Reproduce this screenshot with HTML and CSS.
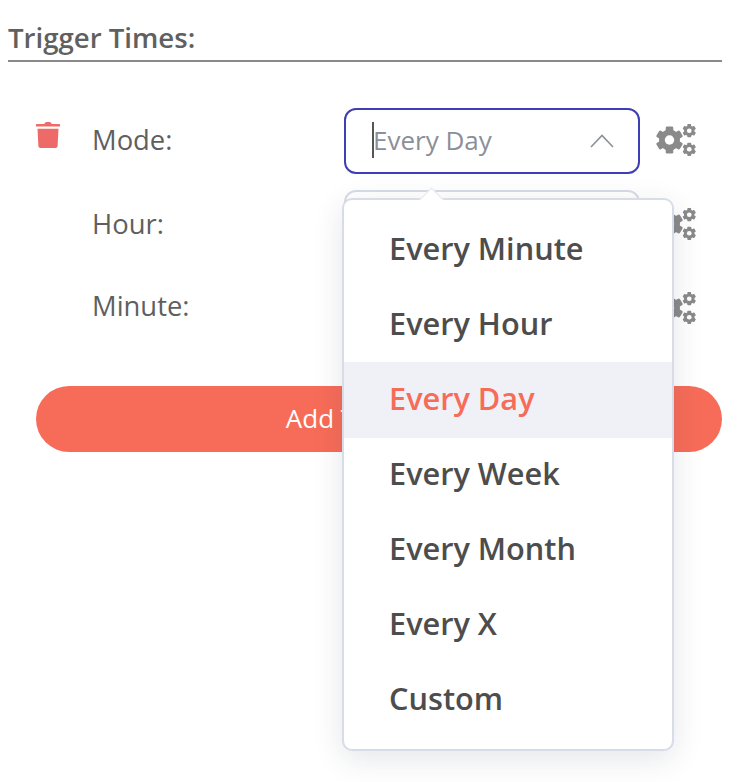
FILE: index.html
```html
<!DOCTYPE html>
<html lang="en">
<head>
    <meta charset="UTF-8">
    <meta name="viewport" content="width=device-width, initial-scale=1.0">
    <title>Trigger Times</title>
    <link rel="stylesheet" href="styles.css">
</head>
<body>

    <svg class="icon-defs" width="0" height="0" aria-hidden="true">
        <symbol id="gear" viewBox="-10 -10 20 20">
            <rect x="-2.8" y="-10" width="5.6" height="20" rx="1"></rect>
            <rect x="-2.8" y="-10" width="5.6" height="20" rx="1" transform="rotate(60)"></rect>
            <rect x="-2.8" y="-10" width="5.6" height="20" rx="1" transform="rotate(120)"></rect>
            <circle r="7.8"></circle>
            <circle r="3.500" fill="#fff"></circle>
        </symbol>
        <symbol id="cogs" viewBox="0 0 40 34">
            <use href="#gear" x="0" y="2" width="27" height="28"></use>
            <use href="#gear" x="26.500" y="0" width="13.500" height="13.500"></use>
            <use href="#gear" x="26.500" y="18.500" width="13.500" height="13.500"></use>
        </symbol>
    </svg>

    <h2 class="section-title">Trigger Times:</h2>

    <div class="trigger">
        <div class="row">
            <svg class="trash" viewBox="0 0 24 26">
                <path d="M8.5 2 C8.5 .8 9.5 0 10.500 0 H13.500 C14.500 0 15.500 .8 15.500 2 H23 C23.600 2 24 2.400 24 3 V4.600 H0 V3 C0 2.400 .4 2 1 2 Z"></path>
                <path d="M1.500 6.800 H22.500 L21.600 24 C21.500 25.200 20.700 26 19.500 26 H4.500 C3.300 26 2.500 25.200 2.400 24 Z"></path>
            </svg>
            <label class="row-label row-label-first">Mode:</label>
            <div class="select select-open">
                <span class="select-value"><i class="caret"></i>Every Day</span>
                <svg class="chevron" viewBox="0 0 24 14"><path d="M1 13 L12 1.500 L23 13"></path></svg>

                <div class="menu">
                    <span class="menu-arrow"></span>
                    <div class="menu-item">Every Minute</div>
                    <div class="menu-item">Every Hour</div>
                    <div class="menu-item active">Every Day</div>
                    <div class="menu-item">Every Week</div>
                    <div class="menu-item">Every Month</div>
                    <div class="menu-item">Every X</div>
                    <div class="menu-item">Custom</div>
                </div>
            </div>
            <svg class="cogs"><use href="#cogs"></use></svg>
        </div>

        <div class="row">
            <span></span>
            <label class="row-label">Hour:</label>
            <div class="select"></div>
            <svg class="cogs cogs-second"><use href="#cogs"></use></svg>
        </div>

        <div class="row">
            <span></span>
            <label class="row-label">Minute:</label>
            <div class="select"></div>
            <svg class="cogs cogs-third"><use href="#cogs"></use></svg>
        </div>
    </div>

    <button class="add-button">Add Trigger Time</button>

</body>
</html>
```

FILE: styles.css
```css
/* General Styling */
html, body {
    height: 100%;
}

body {
    font-family: 'Open Sans', sans-serif;
    background: #fff;
    color: #5f5f5f;
    margin: 0;
    padding: 0 16px 0 8px;
}

.icon-defs {
    position: absolute;
}

.section-title {
    font-size: 27.600px;
    font-weight: 600;
    line-height: 34px;
    color: #606060;
    margin: 0;
    padding: 20px 0 6px;
    border-bottom: 2px solid #8a8a8a;
}

/* Trigger rows */
.trigger {
    display: flex;
    flex-direction: column;
    gap: 16px;
    margin-top: 46px;
    padding-left: 28px;
}

.row {
    display: grid;
    grid-template-columns: 56px 252px 296px 40px;
    align-items: center;
    height: 66px;
}

.trash {
    width: 24px;
    height: 26px;
    fill: #ee6a68;
    margin-bottom: 12px;
}

.row-label {
    font-size: 27.400px;
}

.row-label-first {
    padding-bottom: 3px;
}

.select {
    position: relative;
    box-sizing: border-box;
    height: 66px;
    border: 2px solid #d8dce6;
    border-radius: 12px;
    background: #fff;
    display: flex;
    align-items: center;
    justify-content: space-between;
    padding: 0 24px 0 27px;
}

.select-open {
    border-color: #3f3fb3;
}

.select-value {
    position: relative;
    font-size: 26px;
    color: #8b8f99;
    margin-bottom: 2px;
}

.caret {
    position: absolute;
    left: -1px;
    top: 0;
    width: 2px;
    height: 36px;
    background: #555;
}

.chevron {
    width: 24px;
    height: 14px;
    fill: none;
    stroke: #8b8f99;
    stroke-width: 1.6;
}

.cogs {
    width: 40px;
    height: 34px;
    margin-left: 16px;
    fill: #8a8a8a;
}

.cogs-second {
    margin-top: 4px;
}

.cogs-third {
    margin-top: 8px;
}

/* Dropdown */
.menu {
    position: absolute;
    z-index: 2;
    top: 88px;
    left: -4px;
    box-sizing: border-box;
    width: 332px;
    padding: 12px 0;
    background: #fff;
    border: 2px solid #d8dce8;
    border-radius: 10px;
    box-shadow: 0 8px 30px rgba(40, 50, 80, 0.12);
}

.menu-arrow {
    position: absolute;
    top: -9px;
    left: 79px;
    width: 16px;
    height: 16px;
    background: #fff;
    transform: rotate(45deg);
    border-top: 1px solid #e4e7ee;
    border-left: 1px solid #e4e7ee;
}

.menu-item {
    position: relative;
    font-size: 30.700px;
    font-weight: 600;
    line-height: 73px;
    height: 75px;
    padding-left: 45px;
    color: #4d4d4d;
}

.menu-item.active {
    background: #f0f1f7;
    box-shadow: 0 1px 0 #f0f1f7;
    color: #f76c58;
}

/* Add button */
.add-button {
    display: block;
    width: 686px;
    height: 66px;
    margin: 48px 0 0 28px;
    padding: 0 0 3px 20px;
    border: none;
    border-radius: 33px;
    background: #f76c58;
    color: #fff;
    font-family: 'Open Sans', sans-serif;
    font-size: 26px;
    font-weight: 500;
}
```
